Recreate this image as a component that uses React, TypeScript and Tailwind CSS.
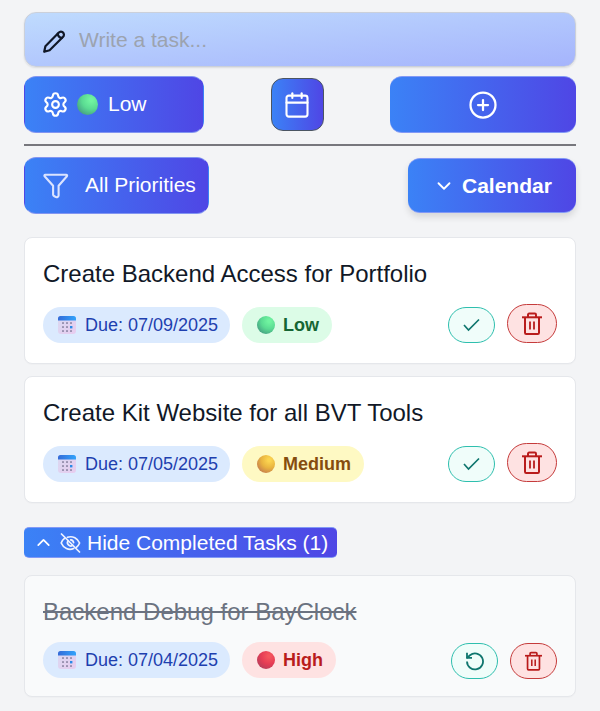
import React from "react";
import { Settings, Calendar, CirclePlus, ChevronDown, ChevronUp } from "lucide-react";

const GRAD = "bg-linear-to-r/srgb from-[#3b82f6] to-[#4f46e5]";

function Pencil() {
  return (
    <svg width="24" height="24" viewBox="0 0 24 24" fill="none" stroke="#111827" strokeWidth="2.2" strokeLinecap="round" strokeLinejoin="round">
      <path d="M2.2 21.8 L3.4 16.2 L16.6 2.8 C17.6 1.7 19.1 1.3 20.4 2 C22.3 3.2 22.4 5.5 20.9 7 L7.6 20.2 Z" />
      <path d="M15.8 3.6 C15.8 6 17.6 7.8 20 7.8" />
    </svg>
  );
}

function Funnel() {
  return (
    <svg width="26" height="26" viewBox="0 0 26 26" fill="none" stroke="#dbe3ff" strokeWidth="2.1" strokeLinecap="round" strokeLinejoin="round">
      <path d="M2.2 1.8 H23.2 a.9.9 0 0 1 .7 1.5 L15.6 12.8 V22.4 a1.9 1.9 0 0 1 -2.6 1.7 L11 23 a1.5 1.5 0 0 1 -.9 -1.4 V12.8 L1.6 3.3 a.9.9 0 0 1 .6 -1.5 Z" />
    </svg>
  );
}

function EyeOff() {
  return (
    <svg width="21" height="20" viewBox="0 0 21 20" fill="none" stroke="#eef2ff" strokeWidth="1.7" strokeLinecap="round" strokeLinejoin="round">
      <path d="M1.5 1 L19.5 19" />
      <path d="M7.4 4.3 C13 2.4 17.6 5.6 19.6 10 C18.9 11.7 17.8 13.2 16.4 14.3" />
      <path d="M4.5 5.4 C2.9 6.6 1.8 8.2 1.2 10 C3.5 15.3 8.8 17.6 13.7 15.5" />
      <path d="M8.1 7.7 A3.3 3.3 0 0 0 12.7 12.3" />
      <path d="M10.7 6.8 A3.3 3.3 0 0 1 13.6 9.7" />
    </svg>
  );
}

function Trash({ small }: { small: boolean }) {
  return (
    <svg width={small ? 17 : 20} height={small ? 20 : 23} viewBox="0 0 20 23" fill="none" stroke="#b91c1c" strokeWidth="2" strokeLinejoin="round">
      <path d="M0 5.3 H20" />
      <path d="M3 5.3 V20.7 a1.2 1.2 0 0 0 1.2 1.2 H15.8 a1.2 1.2 0 0 0 1.2 -1.2 V5.3" />
      <path d="M6 5 V2.7 a1.1 1.1 0 0 1 1.1 -1.1 H12.9 a1.1 1.1 0 0 1 1.1 1.1 V5" />
      <path d="M8 9.6 V17.5 M12 9.6 V17.5" strokeWidth="1.8" />
    </svg>
  );
}

function Ball({ kind, size }: { kind: string; size: number }) {
  const tones: Record<string, string[]> = {
    Low: ["#70f3a0", "#5adb92", "#46a083"],
    Medium: ["#fbd450", "#e9b440", "#c67e4d"],
    High: ["#f4555d", "#e63d55", "#b83e5b"],
  };
  const [light, mid, dark] = tones[kind];
  const id = `ball-${kind}-${size}`;
  return (
    <svg width={size} height={size} viewBox="0 0 20 20" className="shrink-0">
      <defs>
        <radialGradient id={id} cx="0.68" cy="0.28" r="0.8">
          <stop offset="0.1" stopColor={light} />
          <stop offset="0.55" stopColor={mid} />
          <stop offset="1" stopColor={dark} />
        </radialGradient>
      </defs>
      <circle cx="10" cy="10" r="10" fill={`url(#${id})`} />
    </svg>
  );
}

function CalendarEmoji() {
  return (
    <svg width="18" height="18" viewBox="0 0 18 18" className="shrink-0">
      <defs>
        <linearGradient id="page" x1="0" y1="0" x2="1" y2="1">
          <stop offset="0" stopColor="#d9d9f1" />
          <stop offset="1" stopColor="#e8ccef" />
        </linearGradient>
        <linearGradient id="band">
          <stop offset="0" stopColor="#346bd8" />
          <stop offset="1" stopColor="#31a3fb" />
        </linearGradient>
      </defs>
      <rect width="18" height="18" rx="3" fill="url(#page)" />
      <path d="M0 4.6 V2.5 a2.5 2.5 0 0 1 2.5 -2.5 H15.5 a2.5 2.5 0 0 1 2.5 2.5 V4.6 Z" fill="url(#band)" />
      <g fill="#8d86a5" fillOpacity="0.9">
        {[4, 8, 12].map((x) => [6, 10, 14].map((y) => <rect key={`${x}-${y}`} x={x} y={y} width="2" height="2" rx=".4" />))}
      </g>
      <rect x="12" y="10" width="2.4" height="2.4" fill="#2989e8" />
    </svg>
  );
}

const PILL: Record<string, string> = {
  Low: "bg-[#dcfce7] text-[#166534] w-[90px]",
  Medium: "bg-[#fef9c3] text-[#854d0e] w-[122px]",
  High: "bg-[#fee2e2] text-[#b91c1c] w-[94px]",
};

function Task({ title, due, level, done = false }: { title: string; due: string; level: string; done?: boolean }) {
  return (
    <article className={`border border-[#e5e7eb] rounded-lg px-[18px] shadow-[0_1px_1px_rgba(0,0,0,0.02)] ${done ? "h-[122px] bg-[#f9fafb] pt-[18px]" : "h-[127px] bg-white pt-[18px]"}`}>
      <h2 className={`h-9 leading-9 text-[24px] whitespace-nowrap ${done ? "line-through text-[#6b7280]" : "text-[#111827]"}`}>{title}</h2>
      <div className={`flex h-[38px] ${done ? "mt-[11px]" : "mt-[12px]"}`}>
        <div className={`flex gap-3 ${done ? "pt-px" : "pt-[3px]"}`}>
          <span className="flex h-9 w-[187px] items-center gap-[9px] rounded-full bg-[#dbeafe] pl-[15px] text-[18px] text-[#1e40af] whitespace-nowrap">
            <CalendarEmoji />Due: {due}
          </span>
          <span className={`flex h-9 items-center gap-2 rounded-full pl-[15px] text-[18px] font-bold ${PILL[level]}`}>
            <Ball kind={level} size={18} />{level}
          </span>
        </div>
        <div className="ml-auto flex gap-3">
          <button className={`flex h-9 w-[47px] items-center justify-center rounded-full border border-[#2ebfae] bg-[#f0fdfa] ${done ? "mt-[2px]" : "mt-[3px]"}`}>
            {done ? (
              <svg width="20" height="20" viewBox="0 0 20 20" fill="none" stroke="#0f766e" strokeWidth="1.8">
                <path d="M2 10.5 A8 8 0 1 0 5 4.2 L1.7 7" />
                <path d="M2 1.8 V6.8 H7" />
              </svg>
            ) : (
              <svg width="17" height="14" viewBox="0 0 17 14" fill="none" stroke="#0f766e" strokeWidth="1.7">
                <path d="M1 7 L5.5 12 L16 1.5" />
              </svg>
            )}
          </button>
          <button className={`flex items-center justify-center rounded-full border border-[#c53b3b] bg-[#fee2e2] ${done ? "mt-[2px] h-9 w-[47px]" : "h-[39px] w-[50px]"}`}>
            <Trash small={done} />
          </button>
        </div>
      </div>
    </article>
  );
}

export default function App() {
  return (
    <main className="h-[711px] w-[600px] overflow-hidden bg-[#f3f4f6] px-6 pt-3 font-['Liberation_Sans',Arial,sans-serif]">
      <div className="flex h-[55px] items-center rounded-xl border border-[#cbd0da] bg-[linear-gradient(to_bottom_right,#bfdbfe,#a5b4fc)] pl-[17px] shadow-[0_1px_2px_rgba(0,0,0,0.1)]">
        <span className="mt-[4px]"><Pencil /></span>
        <span className="ml-[13px] text-[21px] text-[#9ca3af]">Write a task...</span>
      </div>

      <div className="mt-[9px] flex items-center justify-between">
        <button className={`flex h-[57px] w-[180px] items-center rounded-xl border border-x-transparent border-y-[#8295f1] pl-[17px] text-[21px] text-white ${GRAD}`}>
          <Settings size={27} strokeWidth={1.9} />
          <span className="ml-2 flex -mt-px"><Ball kind="Low" size={21} /></span>
          <span className="ml-[10px] -mt-px">Low</span>
        </button>
        <button className={`flex h-[53px] w-[53px] items-center justify-center rounded-xl border border-[#4b5563] text-white ${GRAD}`}>
          <Calendar size={28} strokeWidth={1.8} />
        </button>
        <button className={`flex h-[57px] w-[186px] items-center justify-center rounded-xl border-y border-[#8299f6] text-white ${GRAD}`}>
          <CirclePlus size={30} strokeWidth={1.8} />
        </button>
      </div>

      <div className="mt-[11px] h-[2px] bg-[#77777d]" />

      <div className="mt-[11px] flex items-center justify-between">
        <button className={`flex h-[57px] w-[185px] items-center rounded-xl border border-x-transparent border-y-[#8295f1] pl-[18px] text-[21px] text-white whitespace-nowrap ${GRAD}`}>
          <Funnel /><span className="ml-4 -mt-px">All Priorities</span>
        </button>
        <button className={`flex h-[55px] w-[168px] items-center rounded-xl border-y border-[#8299f6] pl-[25px] text-[21px] font-bold text-white shadow-[0_4px_7px_rgba(0,0,0,0.12)] ${GRAD}`}>
          <ChevronDown size={22} strokeWidth={2} /><span className="ml-[7px]">Calendar</span>
        </button>
      </div>

      <div className="mt-[23px] flex flex-col gap-3">
        <Task title="Create Backend Access for Portfolio" due="07/09/2025" level="Low" />
        <Task title="Create Kit Website for all BVT Tools" due="07/05/2025" level="Medium" />
      </div>
      <button className={`mt-6 flex h-[31px] w-[313px] items-center rounded-[5px] border-y border-[#8299f6] pl-[9px] text-[21px] text-white whitespace-nowrap ${GRAD}`}>
        <ChevronUp size={21} strokeWidth={2} />
        <span className="ml-[6px]"><EyeOff /></span>
        <span className="ml-[6px]">Hide Completed Tasks (1)</span>
      </button>
      <div className="mt-[17px]">
        <Task title="Backend Debug for BayClock" due="07/04/2025" level="High" done />
      </div>
    </main>
  );
}
